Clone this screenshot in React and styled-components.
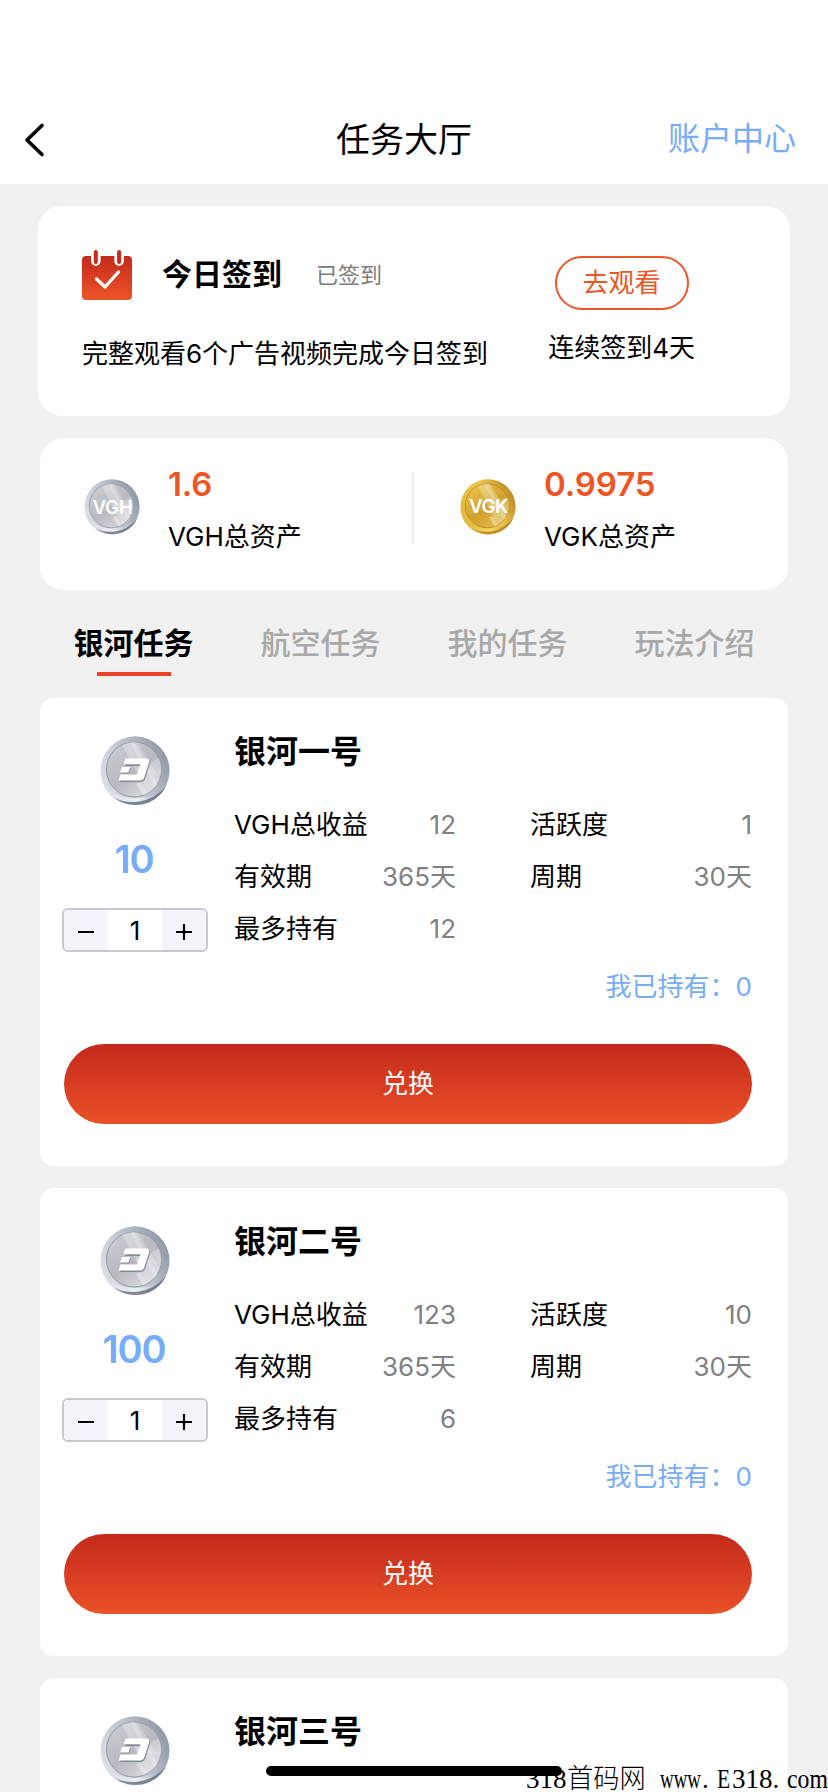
import React, { useState } from 'react';
import styled, { createGlobalStyle } from 'styled-components';

const GlobalStyle = createGlobalStyle`
  * { box-sizing: border-box; }
  body {
    margin: 0;
    background: #f1f1f1;
    font-family: Inter, "Noto Sans CJK SC", sans-serif;
    font-size: 26px;
    font-weight: 370;
    line-height: 36px;
    color: #000;
  }
  button { font: inherit; border: 0; padding: 0; margin: 0; background: none; color: inherit; }
`;

const Page = styled.div`
  position: relative;
  width: 828px;
  height: 1792px;
  overflow: hidden;
  background: #f1f1f1;
`;

const Header = styled.header`
  display: grid;
  grid-template-columns: 300px 208px 1fr;
  align-items: center;
  height: 184px;
  padding: 96px 32px 0 0;
  background: #fff;
`;

const BackButton = styled.button`
  display: flex;
  padding-left: 24px;
`;

const PageTitle = styled.h1`
  margin: 0;
  font-size: 34px;
  font-weight: 400;
  line-height: 40px;
  text-align: center;
`;

const AccountLink = styled.a`
  padding-bottom: 2px;
  font-size: 32px;
  line-height: 40px;
  text-align: right;
  color: #76acf8;
`;

const CheckInCard = styled.section`
  display: flex;
  justify-content: space-between;
  width: 752px;
  height: 210px;
  margin: 22px 0 0 38px;
  padding: 44px 95px 0 44px;
  border-radius: 24px;
  background: #fff;
`;

const CheckInInfo = styled.div`
  display: flex;
  flex-direction: column;
  gap: 36px;
`;

const CheckInHeading = styled.div`
  display: flex;
  align-items: center;
  height: 50px;
`;

const CheckInTitle = styled.h2`
  margin: 0 0 2px 30px;
  font-size: 30px;
  font-weight: 700;
`;

const CheckInStatus = styled.span`
  margin: 0 0 0 34px;
  font-size: 22px;
  color: #7c7c7c;
`;

const CheckInAction = styled.div`
  display: flex;
  flex-direction: column;
  align-items: center;
  gap: 20px;
  padding-top: 6px;
`;

const WatchButton = styled.button`
  width: 134px;
  height: 54px;
  border: 2px solid #ee5524;
  border-radius: 27px;
  color: #ee5524;
`;

const AssetsCard = styled.section`
  display: flex;
  align-items: flex-start;
  width: 748px;
  height: 152px;
  margin: 22px 0 0 40px;
  padding: 26px 0 0 44px;
  border-radius: 24px;
  background: #fff;
`;

const Asset = styled.div`
  display: flex;
  width: ${(p) => p.$width}px;
`;

const AssetCoin = styled.div`
  display: flex;
  margin: 15px 0 0;
`;

const AssetText = styled.div`
  margin-left: 28px;
`;

const AssetValue = styled.div`
  height: 40px;
  font-size: 33px;
  font-weight: 600;
  line-height: 40px;
  letter-spacing: -0.1px;
  color: #ee5524;
`;

const AssetLabel = styled.div`
  margin-top: 15px;
`;

const Divider = styled.div`
  width: 2px;
  height: 72px;
  margin: 8px 46px 0 0;
  background: #eee;
`;

const Tabs = styled.nav`
  display: flex;
  width: 748px;
  height: 108px;
  margin-left: 40px;
  padding-top: 35px;
`;

const Tab = styled.button`
  display: flex;
  flex: 1;
  flex-direction: column;
  align-items: center;
  gap: 11px;
  font-size: 30px;
  font-weight: ${(p) => (p.$active ? 700 : 500)};
  color: ${(p) => (p.$active ? '#000' : '#a8a8a8')};

  &::after {
    content: '';
    width: 74px;
    height: 4px;
    background: ${(p) => (p.$active ? '#ee4326' : 'transparent')};
  }
`;

const TaskList = styled.main`
  display: flex;
  flex-direction: column;
  gap: 22px;
  margin-left: 40px;
`;

const TaskCard = styled.article`
  width: 748px;
  height: 468px;
  padding: 36px 36px 0 0;
  border-radius: 14px;
  background: #fff;
`;

const TaskTop = styled.div`
  display: flex;
  height: 310px;
`;

const TaskSide = styled.div`
  display: flex;
  flex-direction: column;
  align-items: center;
  width: 190px;
  padding-top: 2px;
`;

const Price = styled.div`
  margin: 31px 2px 0 0;
  font-size: 38px;
  font-weight: 600;
  line-height: 44px;
  letter-spacing: -1px;
  color: #76acf8;
`;

const Stepper = styled.div`
  display: grid;
  grid-template-columns: 44px 54px 44px;
  width: 146px;
  height: 44px;
  margin-top: 27px;
  border: 2px solid #c8c9cb;
  border-radius: 6px;
  overflow: hidden;
`;

const StepButton = styled.button`
  display: grid;
  place-items: center;
  padding-top: 2px;
  background: #f4f5fa;
`;

const Quantity = styled.span`
  line-height: 41px;
  text-align: center;
`;

const TaskBody = styled.div`
  width: 518px;
  margin-left: 4px;
`;

const TaskName = styled.h3`
  margin: 0;
  font-size: 32px;
  font-weight: 700;
  line-height: 35px;
`;

const Stats = styled.div`
  display: grid;
  grid-template-columns: 222px 222px;
  grid-auto-rows: 52px;
  column-gap: 74px;
  margin-top: 30px;
`;

const Stat = styled.div`
  display: flex;
  align-items: center;
  justify-content: space-between;
`;

const StatValue = styled.span`
  color: #808080;
`;

const Owned = styled.div`
  margin-top: 14px;
  text-align: right;
  color: #76acf8;
`;

const RedeemButton = styled.button`
  display: block;
  width: 688px;
  height: 80px;
  margin-left: 24px;
  border-radius: 40px;
  background: linear-gradient(#c42a1c, #e95127);
  color: #fff;
`;

const HomeIndicator = styled.div`
  position: absolute;
  left: 266px;
  bottom: 16px;
  width: 296px;
  height: 10px;
  border-radius: 5px;
  background: #000;
`;

const SiteMark = styled.div`
  position: absolute;
  right: 0;
  bottom: 0;
  display: flex;
  width: 302px;
  font-family: "Liberation Serif", "Noto Sans CJK SC", serif;
  font-size: 27px;
  font-weight: 400;
  line-height: 26px;
  white-space: pre;
`;

const MarkPart = styled.span`
  width: ${(p) => p.$width}px;
  font-weight: ${(p) => p.$weight || 400};
  transform: scaleX(${(p) => p.$squeeze || 1});
  transform-origin: left;
`;

function BackIcon() {
  return (
    <svg width="22" height="36" viewBox="0 0 22 36" fill="none">
      <path d="M18 3.500 3 18l15 14.500" stroke="#000" strokeWidth="3.600" strokeLinecap="round" strokeLinejoin="round" />
    </svg>
  );
}

function CalendarIcon() {
  return (
    <svg width="50" height="50" viewBox="0 0 50 50" fill="none">
      <defs>
        <linearGradient id="calendar" x1="0" y1="0" x2="0" y2="1">
          <stop offset="0" stopColor="#c42a1c" />
          <stop offset="1" stopColor="#ec5528" />
        </linearGradient>
      </defs>
      <rect y="6" width="50" height="44" rx="4" fill="url(#calendar)" />
      <path d="M9 4v7a4.800 4.800 0 0 0 9.600 0V4M32.300 4v7a4.800 4.800 0 0 0 9.600 0V4" fill="#fff" />
      <path d="M13.800 2v10M37.100 2v10" stroke="#c42a1c" strokeWidth="4" strokeLinecap="round" />
      <path d="m14.500 29 8.500 8L36.500 22" stroke="#fff" strokeWidth="3.300" strokeLinecap="round" strokeLinejoin="round" />
    </svg>
  );
}

const SILVER = {
  rim: ['#d9dde5', '#eceef3', '#99a1af'],
  bevel: ['#dfe3ea', '#b9bfca', '#8d95a4'],
  face: ['#cbced5', '#b8b9c0', '#dcdce0'],
  edge: '#9298a5',
  shadow: '#59647a',
};
const GOLD = {
  rim: ['#dfb436', '#f5da66', '#c48c24'],
  bevel: ['#e2b93a', '#e9c64c', '#bd8622'],
  face: ['#ecc74a', '#d0a02e', '#e4bd4a'],
  edge: '#b98623',
  shadow: '#b0781c',
};

function Coin({ id, size, tone, children }) {
  return (
    <svg width={size} height={size} viewBox="0 0 70 70">
      <defs>
        <linearGradient id={`${id}-rim`} x1="0" y1="0" x2="1" y2="0">
          <stop offset="0" stopColor={tone.rim[0]} />
          <stop offset="0.55" stopColor={tone.rim[1]} />
          <stop offset="1" stopColor={tone.rim[2]} />
        </linearGradient>
        <linearGradient id={`${id}-bevel`} x1="0" y1="0.8" x2="1" y2="0.3">
          <stop offset="0" stopColor={tone.bevel[0]} />
          <stop offset="0.6" stopColor={tone.bevel[1]} />
          <stop offset="1" stopColor={tone.bevel[2]} />
        </linearGradient>
        <linearGradient id={`${id}-face`} x1="0.1" y1="0" x2="0.8" y2="1">
          <stop offset="0" stopColor={tone.face[0]} />
          <stop offset="0.55" stopColor={tone.face[1]} />
          <stop offset="1" stopColor={tone.face[2]} />
        </linearGradient>
        <clipPath id={`${id}-clip`}>
          <circle cx="34" cy="33.500" r="27.500" />
        </clipPath>
      </defs>
      <circle cx="35" cy="34.800" r="34.500" fill={`url(#${id}-bevel)`} />
      <path d="M4 50a34.500 34.500 0 0 0 62 0q-12 12-31 12T4 50z" fill={`url(#${id}-rim)`} />
      <path d="M14 61.500a34.500 34.500 0 0 0 52-11q-11 12.500-27 15-14 2-25-4z" fill={tone.shadow} opacity="0.75" />
      <circle cx="34" cy="33.500" r="27.500" fill={`url(#${id}-face)`} stroke={tone.edge} strokeWidth="1" />
      <g clipPath={`url(#${id}-clip)`} fill="#fff">
        <path d="M19 3h14l32 58H50z" opacity="0.28" />
        <path d="m28 3 7-1 33 54-9 3z" opacity="0.22" />
        <path d="m36 48 5-2 11 17-6 1z" opacity="0.36" />
        <path d="M34 34 64 20v20z" opacity="0.22" />
      </g>
      {children}
    </svg>
  );
}

function DashCoin({ id }) {
  return (
    <Coin id={id} size={70} tone={SILVER}>
      <path d="M27 24h20q4 0 3 4l-4.500 14q-1 4-5 4H20l2-6h16l3.500-10H25zM22.500 32H31l-2 5.500h-8.500z" fill="#5d6678" opacity="0.6" />
      <path d="M25.500 22.500H46q4 0 3 4l-4.500 14q-1 4-5 4H18.500l2-6H37l3.500-10.200H23.500zM22 31h8.500l-2 5.500H20z" fill="#fff" />
    </Coin>
  );
}

function TextCoin({ id, tone, label, y }) {
  return (
    <Coin id={id} size={56} tone={tone}>
      <text x="35.500" y={y} textAnchor="middle" fontFamily="Inter, sans-serif" fontSize="23.500" fontWeight="600" letterSpacing="-0.6" fill="#fff">
        {label}
      </text>
    </Coin>
  );
}

function StepIcon({ plus }) {
  return (
    <svg width="18" height="18" viewBox="0 0 18 18">
      <path d={plus ? 'M1 9h16M9 1v16' : 'M1 9h16'} stroke="#000" strokeWidth="2.200" />
    </svg>
  );
}

const TABS = ['银河任务', '航空任务', '我的任务', '玩法介绍'];

const TASKS = [
  { name: '银河一号', price: 10, income: '12', activity: '1', limit: '12' },
  { name: '银河二号', price: 100, income: '123', activity: '10', limit: '6' },
  { name: '银河三号' },
];

function TaskDetails({ task }) {
  const stats = [
    ['VGH总收益', task.income],
    ['活跃度', task.activity],
    ['有效期', '365天'],
    ['周期', '30天'],
    ['最多持有', task.limit],
  ];
  return (
    <>
      <Stats>
        {stats.map(([label, value]) => (
          <Stat key={label}>
            <span>{label}</span>
            <StatValue>{value}</StatValue>
          </Stat>
        ))}
      </Stats>
      <Owned>我已持有：0</Owned>
    </>
  );
}

function PurchaseCount({ price }) {
  const [count, setCount] = useState(1);
  return (
    <>
      <Price>{price}</Price>
      <Stepper>
        <StepButton aria-label="减少" onClick={() => setCount(Math.max(1, count - 1))}>
          <StepIcon />
        </StepButton>
        <Quantity>{count}</Quantity>
        <StepButton aria-label="增加" onClick={() => setCount(count + 1)}>
          <StepIcon plus />
        </StepButton>
      </Stepper>
    </>
  );
}

function Task({ task, index }) {
  const loaded = task.price !== undefined;
  return (
    <TaskCard>
      <TaskTop>
        <TaskSide>
          <DashCoin id={`task${index}`} />
          {loaded && <PurchaseCount price={task.price} />}
        </TaskSide>
        <TaskBody>
          <TaskName>{task.name}</TaskName>
          {loaded && <TaskDetails task={task} />}
        </TaskBody>
      </TaskTop>
      {loaded && <RedeemButton>兑换</RedeemButton>}
    </TaskCard>
  );
}

export default function App() {
  const [active, setActive] = useState(0);
  return (
    <Page>
      <GlobalStyle />
      <Header>
        <BackButton aria-label="返回">
          <BackIcon />
        </BackButton>
        <PageTitle>任务大厅</PageTitle>
        <AccountLink>账户中心</AccountLink>
      </Header>

      <CheckInCard>
        <CheckInInfo>
          <CheckInHeading>
            <CalendarIcon />
            <CheckInTitle>今日签到</CheckInTitle>
            <CheckInStatus>已签到</CheckInStatus>
          </CheckInHeading>
          <div>完整观看6个广告视频完成今日签到</div>
        </CheckInInfo>
        <CheckInAction>
          <WatchButton>去观看</WatchButton>
          <div>连续签到4天</div>
        </CheckInAction>
      </CheckInCard>

      <AssetsCard>
        <Asset $width={328}>
          <AssetCoin>
            <TextCoin id="vgh" tone={SILVER} label="VGH" y={44} />
          </AssetCoin>
          <AssetText>
            <AssetValue>1.6</AssetValue>
            <AssetLabel>VGH总资产</AssetLabel>
          </AssetText>
        </Asset>
        <Divider />
        <Asset $width={300}>
          <AssetCoin>
            <TextCoin id="vgk" tone={GOLD} label="VGK" y={42.5} />
          </AssetCoin>
          <AssetText>
            <AssetValue>0.9975</AssetValue>
            <AssetLabel>VGK总资产</AssetLabel>
          </AssetText>
        </Asset>
      </AssetsCard>

      <Tabs>
        {TABS.map((tab, i) => (
          <Tab key={tab} $active={i === active} onClick={() => setActive(i)}>
            {tab}
          </Tab>
        ))}
      </Tabs>

      <TaskList>
        {TASKS.map((task, i) => (
          <Task key={task.name} task={task} index={i} />
        ))}
      </TaskList>

      <SiteMark>
        <MarkPart $width={41}>318</MarkPart>
        <MarkPart $width={93} $weight={300} $squeeze={0.97}>首码网</MarkPart>
        <MarkPart $width={42} $squeeze={0.7}>www</MarkPart>
        <MarkPart $width={15}>.</MarkPart>
        <MarkPart $width={15} $squeeze={0.8}>E</MarkPart>
        <MarkPart $width={40.5}>318</MarkPart>
        <MarkPart $width={14}>.</MarkPart>
        <MarkPart $width={41} $squeeze={0.88}>com</MarkPart>
      </SiteMark>
      <HomeIndicator />
    </Page>
  );
}
